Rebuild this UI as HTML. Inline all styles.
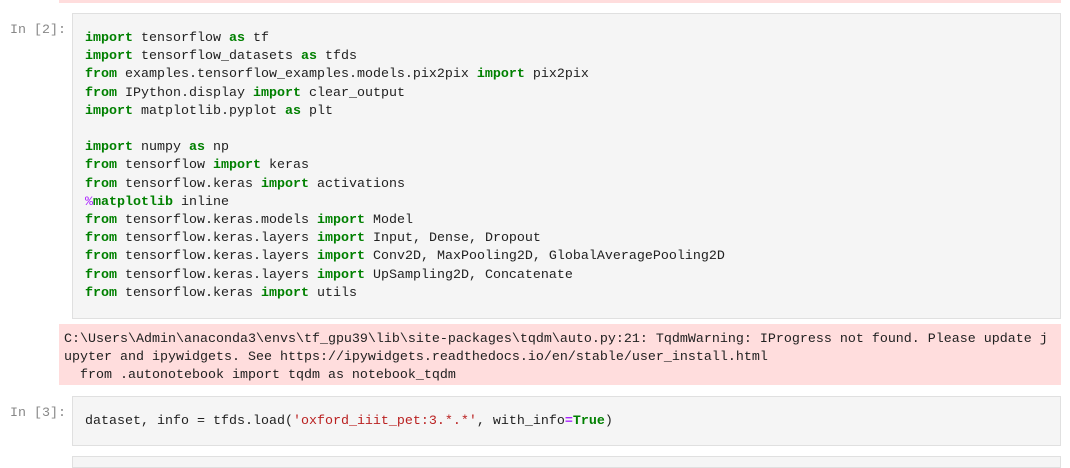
<!DOCTYPE html>
<html><head><style>
body{margin:0;width:1070px;height:459px;background:#fff;position:relative;overflow:hidden;font-family:"Liberation Mono",monospace;font-size:13.33px;color:#212121}
.k{color:#008000;font-weight:bold}.o{color:#aa22ff;font-weight:bold}.s{color:#ba2121}.p{color:#aa22ff}
.box{position:absolute;left:72px;width:987px;background:#f5f5f5;border:1px solid #e0e0e0}
pre{margin:0;font:inherit;white-space:pre}
.prompt{position:absolute;left:10px;color:#888;font-size:13.33px}
.err{position:absolute;left:59px;width:1002px;background:#ffdddd}
</style></head><body>
<div class="err" style="top:0;height:3px"></div>
<div class="prompt" style="top:23px">In [2]:</div>
<div class="box" style="top:13px;height:304px"><pre style="position:absolute;left:12px;top:16px;line-height:18.2px"><span class="k">import</span> tensorflow <span class="k">as</span> tf
<span class="k">import</span> tensorflow_datasets <span class="k">as</span> tfds
<span class="k">from</span> examples.tensorflow_examples.models.pix2pix <span class="k">import</span> pix2pix
<span class="k">from</span> IPython.display <span class="k">import</span> clear_output
<span class="k">import</span> matplotlib.pyplot <span class="k">as</span> plt

<span class="k">import</span> numpy <span class="k">as</span> np
<span class="k">from</span> tensorflow <span class="k">import</span> keras
<span class="k">from</span> tensorflow.keras <span class="k">import</span> activations
<span class="p">%</span><span class="k">matplotlib</span> inline
<span class="k">from</span> tensorflow.keras.models <span class="k">import</span> Model
<span class="k">from</span> tensorflow.keras.layers <span class="k">import</span> Input, Dense, Dropout
<span class="k">from</span> tensorflow.keras.layers <span class="k">import</span> Conv2D, MaxPooling2D, GlobalAveragePooling2D
<span class="k">from</span> tensorflow.keras.layers <span class="k">import</span> UpSampling2D, Concatenate
<span class="k">from</span> tensorflow.keras <span class="k">import</span> utils</pre></div>
<div class="err" style="top:324px;height:61px"><pre style="position:absolute;left:5px;top:7px;line-height:18px">C:\Users\Admin\anaconda3\envs\tf_gpu39\lib\site-packages\tqdm\auto.py:21: TqdmWarning: IProgress not found. Please update j
upyter and ipywidgets. See https://ipywidgets.readthedocs.io/en/stable/user_install.html
  from .autonotebook import tqdm as notebook_tqdm</pre></div>
<div class="prompt" style="top:406px">In [3]:</div>
<div class="box" style="top:396px;height:48px"><pre style="position:absolute;left:12px;top:16px;line-height:18px">dataset, info = tfds.load(<span class="s">'oxford_iiit_pet:3.*.*'</span>, with_info<span class="o">=</span><span class="k">True</span>)</pre></div>
<div class="box" style="top:456px;height:10px"></div>
</body></html>
